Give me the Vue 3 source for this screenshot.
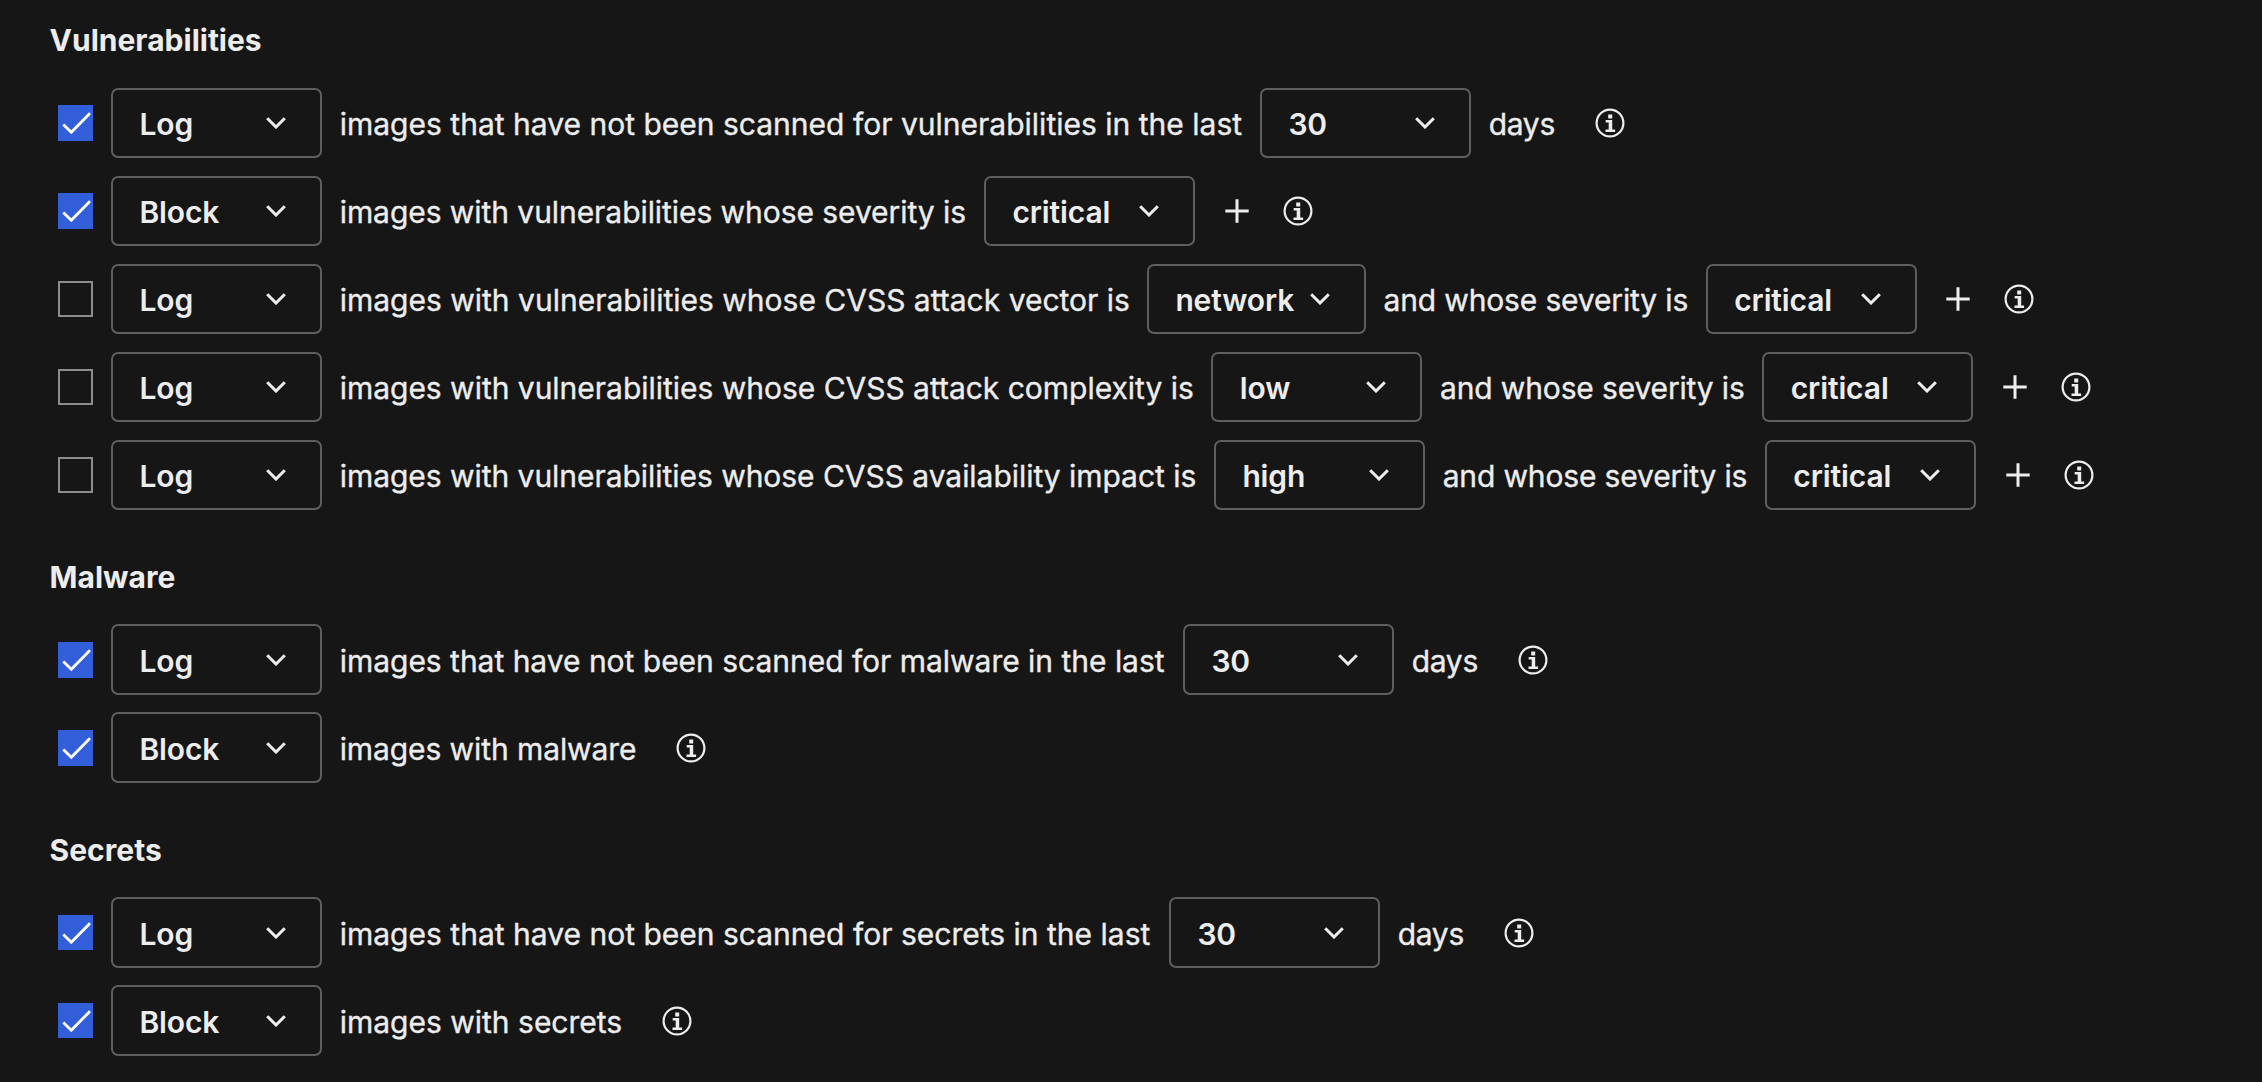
<script setup>
const scannedTail = [{ select: '30' }, { text: 'days', width: 65.5, tracking: -0.3 }]
const critical = { select: 'critical' }
const severity = [{ text: 'and whose severity is', width: 304, tracking: -0.15 }, critical]

const sections = [
  {
    title: 'Vulnerabilities',
    rules: [
      { on: true, action: 'Log', parts: [{ text: 'images that have not been scanned for vulnerabilities in the last', width: 902, tracking: 0.01 }, ...scannedTail] },
      { on: true, action: 'Block', add: true, parts: [{ text: 'images with vulnerabilities whose severity is', width: 626, tracking: -0.06 }, critical] },
      { on: false, action: 'Log', add: true, parts: [{ text: 'images with vulnerabilities whose CVSS attack vector is', width: 789, tracking: 0 }, { select: 'network' }, ...severity] },
      { on: false, action: 'Log', add: true, parts: [{ text: 'images with vulnerabilities whose CVSS attack complexity is', width: 853.4, tracking: -0.02 }, { select: 'low' }, ...severity] },
      { on: false, action: 'Log', add: true, parts: [{ text: 'images with vulnerabilities whose CVSS availability impact is', width: 856, tracking: -0.04 }, { select: 'high' }, ...severity] },
    ],
  },
  {
    title: 'Malware',
    rules: [
      { on: true, action: 'Log', parts: [{ text: 'images that have not been scanned for malware in the last', width: 825, tracking: -0.02 }, ...scannedTail] },
      { on: true, action: 'Block', parts: [{ text: 'images with malware', width: 295, tracking: -0.09 }] },
    ],
  },
  {
    title: 'Secrets',
    rules: [
      { on: true, action: 'Log', parts: [{ text: 'images that have not been scanned for secrets in the last', width: 811, tracking: 0.01 }, ...scannedTail] },
      { on: true, action: 'Block', parts: [{ text: 'images with secrets', width: 281 }] },
    ],
  },
]

const phraseStyle = ({ width, tracking }) => ({
  width: `${width}px`,
  letterSpacing: `${tracking || 0}px`,
})
</script>

<template>
  <main class="policy">
    <section v-for="section in sections" :key="section.title" class="section">
      <h2>{{ section.title }}</h2>
      <div class="rules">
        <div v-for="(rule, i) in section.rules" :key="i" class="rule">
          <span class="checkbox" :class="{ checked: rule.on }" role="checkbox" :aria-checked="rule.on">
            <svg v-if="rule.on" viewBox="0 0 35 36"><path d="M5.3 19.6 13.3 27.2 32 8.2" /></svg>
          </span>
          <button class="select" type="button">
            <span class="value">{{ rule.action }}</span>
            <svg class="chevron" viewBox="0 0 20 12"><path d="M1.2 1.2 10 10 18.8 1.2" /></svg>
          </button>
          <template v-for="(part, j) in rule.parts" :key="j">
            <span v-if="part.text" class="phrase" :style="phraseStyle(part)">{{ part.text }}</span>
            <button v-else class="select" type="button">
              <span class="value">{{ part.select }}</span>
              <svg class="chevron" viewBox="0 0 20 12"><path d="M1.2 1.2 10 10 18.8 1.2" /></svg>
            </button>
          </template>
          <svg v-if="rule.add" class="plus" viewBox="0 0 24 24"><path d="M12 0.3V23.7M0.3 12H23.7" /></svg>
          <svg class="info" viewBox="0 0 30 30">
            <circle cx="15" cy="15" r="13.4" />
            <path d="M13.2 6.5h4v4h-4zM10.7 12h6.5v9.6h2.9V24h-9.6v-2.4h3.2v-7.2h-3z" />
          </svg>
        </div>
      </div>
    </section>
  </main>
</template>

<style>
body {
  background: #161616;
}
</style>

<style scoped>
.policy {
  box-sizing: border-box;
  height: 1082px;
  padding: 20px 0 0 50px;
  overflow: hidden;
  background: #161616;
  color: #ededed;
  font-family: Inter, "Liberation Sans", sans-serif;
  font-size: 30px;
  line-height: 40px;
}
.section {
  margin-bottom: 46.65px;
}
h2 {
  margin: 0 0 27.65px -0.4px;
  font-size: 30px;
  font-weight: 700;
  line-height: 40px;
}
.rules {
  display: flex;
  flex-direction: column;
  gap: 17.4px;
  padding-left: 8px;
}
.rule {
  display: flex;
  align-items: center;
  height: 70.6px;
  white-space: nowrap;
}
.checkbox {
  box-sizing: border-box;
  width: 35px;
  height: 35.6px;
  margin-right: 18px;
  border: 2px solid #8d8d8d;
}
.checkbox.checked {
  border: 0;
  background: #325fd9;
}
.checkbox svg {
  display: block;
  width: 35px;
  height: 36px;
  fill: none;
  stroke: #fff;
  stroke-width: 2.8;
}
.select {
  box-sizing: border-box;
  display: flex;
  flex: none;
  align-items: center;
  justify-content: space-between;
  min-width: 211px;
  height: 70.6px;
  padding: 0 34px 0 26.4px;
  border: 2px solid #5e5e5e;
  border-radius: 7px;
  background: transparent;
  color: inherit;
  font: 600 30px/40px Inter, "Liberation Sans", sans-serif;
  letter-spacing: -0.12px;
  gap: 15.6px;
}
.value,
.phrase {
  padding-top: 2px;
}
.chevron {
  width: 20px;
  height: 12px;
  fill: none;
  stroke: #ededed;
  stroke-width: 3;
}
.phrase {
  flex: none;
  margin: 0 18.3px 0 17.7px;
  -webkit-text-stroke: 0.35px #ededed;
}
.plus {
  width: 24px;
  height: 24px;
  margin-left: 29.6px;
  fill: none;
  stroke: #ededed;
  stroke-width: 3;
}
.info {
  width: 30px;
  height: 30px;
  margin-left: 22.7px;
  fill: #ededed;
}
.plus + .info {
  margin-left: 34px;
}
.info circle {
  fill: none;
  stroke: #ededed;
  stroke-width: 2.2;
}
</style>
